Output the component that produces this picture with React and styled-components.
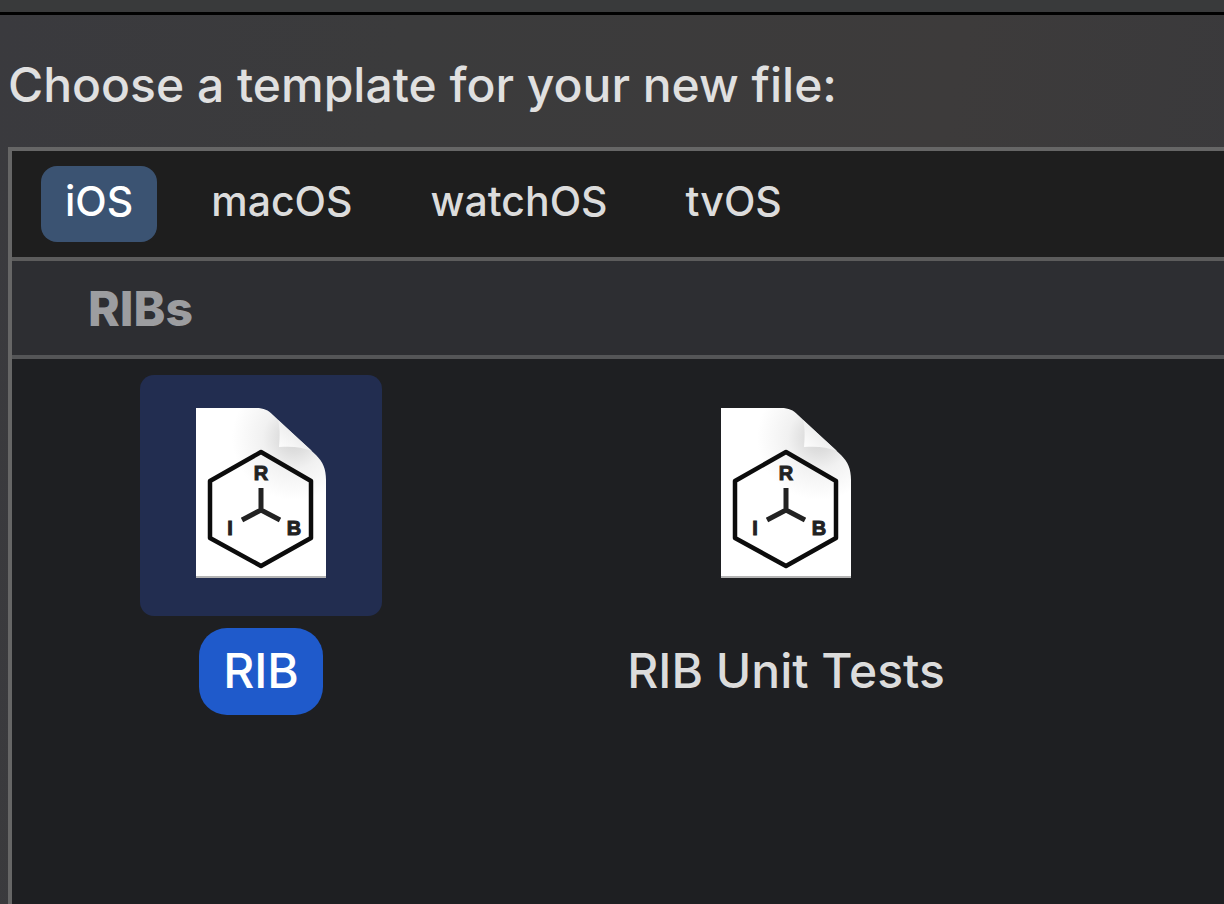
import React, { useState } from 'react';
import styled, { createGlobalStyle } from 'styled-components';

const GlobalStyle = createGlobalStyle`
  * {
    box-sizing: border-box;
  }

  body {
    margin: 0;
    background-color: #3a3a3c;
    font-family: Inter, "Liberation Sans", sans-serif;
  }
`;

const Sheet = styled.main`
  display: flex;
  flex-direction: column;
  min-height: 100vh;
  background: linear-gradient(100deg, #3a3a3e 0%, #3b3b3c 30%, #3d3b3b 70%, #39393c 100%);
`;

const TitleBar = styled.div`
  height: 15px;
  background-color: #393a3b;
  border-bottom: 3px solid #000;
`;

const Heading = styled.h1`
  margin: 0;
  padding: 42px 8px 34px;
  font-size: 48px;
  line-height: 56px;
  font-weight: 500;
  color: #e0e0e0;
`;

const Panel = styled.section`
  display: flex;
  flex: 1;
  flex-direction: column;
  margin-left: 8px;
  border-top: 4px solid #666;
  border-left: 4px solid #666;
  background-color: #1e1f22;
`;

const Tabs = styled.nav`
  display: flex;
  gap: 30px;
  padding: 15px 29px;
  background-color: #1e1e1e;
  border-bottom: 4px solid #5c5c5c;
`;

const Tab = styled.button`
  height: 76px;
  padding: 0 24px 6px;
  border: 0;
  border-radius: 16px;
  background-color: ${({ $active }) => ($active ? '#3b5372' : 'transparent')};
  color: ${({ $active }) => ($active ? '#fff' : '#dcdcdc')};
  font-family: inherit;
  font-size: 41px;
  font-weight: 500;
`;

const SectionTitle = styled.h2`
  margin: 0;
  padding: 20px 76px 18px;
  font-size: 48px;
  line-height: 56px;
  font-weight: 800;
  color: #9c9da0;
  background-color: #2d2e32;
  border-bottom: 4px solid #545557;
`;

const Templates = styled.div`
  display: flex;
  flex-wrap: wrap;
  gap: 24px 159px;
  padding: 16px 66px;
`;

const Template = styled.button`
  display: flex;
  flex-direction: column;
  align-items: center;
  gap: 12px;
  width: 366px;
  padding: 0;
  border: 0;
  background: none;
  font-family: inherit;
`;

const Tile = styled.span`
  display: flex;
  align-items: center;
  justify-content: center;
  width: 242px;
  height: 241px;
  padding-bottom: 6px;
  border-radius: 14px;
  background-color: ${({ $active }) => ($active ? '#222d50' : 'transparent')};
`;

const Label = styled.span`
  padding: 15px 24px 16px;
  border-radius: 28px;
  font-size: 48px;
  line-height: 56px;
  font-weight: 500;
  white-space: nowrap;
  background-color: ${({ $active }) => ($active ? '#1f5acb' : 'transparent')};
  color: ${({ $active }) => ($active ? '#fff' : '#dcdcdc')};
`;

const Letter = styled.text`
  font-family: "Liberation Sans", sans-serif;
  font-size: 20px;
  font-weight: 700;
  text-anchor: middle;
  fill: #222;
  stroke: #222;
  stroke-width: 1px;
`;

const FileIcon = ({ id }) => (
  <svg width="130" height="170" viewBox="0 0 130 170" aria-hidden="true">
    <defs>
      <radialGradient id={`${id}-page`} gradientUnits="userSpaceOnUse" cx="98" cy="30" r="62">
        <stop offset="0" stopColor="#d2d2d2" />
        <stop offset="0.25" stopColor="#e0e0e0" />
        <stop offset="0.5" stopColor="#f1f1f1" />
        <stop offset="1" stopColor="#fff" />
      </radialGradient>
      <linearGradient id={`${id}-fold`} x1="0" y1="1" x2="0.6" y2="0.4">
        <stop offset="0" stopColor="#fff" />
        <stop offset="1" stopColor="#ececec" />
      </linearGradient>
    </defs>
    <path d="M0 0H60C68 0 72 2 77 7L120 47C127 54 130 61 130 72V170H0Z" fill={`url(#${id}-page)`} />
    <path d="M82 12C84 20 84 28 83 39C96 38 106 39 116 43Z" fill={`url(#${id}-fold)`} />
    <path d="M0 169H130" stroke="#b4b4b4" strokeWidth="2" />
    <path
      d="M65 44L115 73V130L65 158L14 130V73Z"
      fill="none"
      stroke="#0c0c0c"
      strokeWidth="4.5"
      strokeLinejoin="round"
    />
    <path d="M65 80V102M46 112L65 102L84 112" fill="none" stroke="#222" strokeWidth="5" />
    <Letter x="65" y="72">R</Letter>
    <Letter x="34" y="127">I</Letter>
    <Letter x="98" y="127">B</Letter>
  </svg>
);

const platforms = ['iOS', 'macOS', 'watchOS', 'tvOS'];
const templates = ['RIB', 'RIB Unit Tests'];

const App = () => {
  const [platform, setPlatform] = useState('iOS');
  const [template, setTemplate] = useState('RIB');

  return (
    <>
      <GlobalStyle />
      <Sheet>
        <TitleBar />
        <Heading>Choose a template for your new file:</Heading>
        <Panel>
          <Tabs>
            {platforms.map((name) => (
              <Tab
                key={name}
                type="button"
                aria-pressed={name === platform}
                $active={name === platform}
                onClick={() => setPlatform(name)}
              >
                {name}
              </Tab>
            ))}
          </Tabs>
          <SectionTitle>RIBs</SectionTitle>
          <Templates>
            {templates.map((name, i) => (
              <Template
                key={name}
                type="button"
                aria-pressed={name === template}
                onClick={() => setTemplate(name)}
              >
                <Tile $active={name === template}>
                  <FileIcon id={`file-${i}`} />
                </Tile>
                <Label $active={name === template}>{name}</Label>
              </Template>
            ))}
          </Templates>
        </Panel>
      </Sheet>
    </>
  );
};

export default App;
